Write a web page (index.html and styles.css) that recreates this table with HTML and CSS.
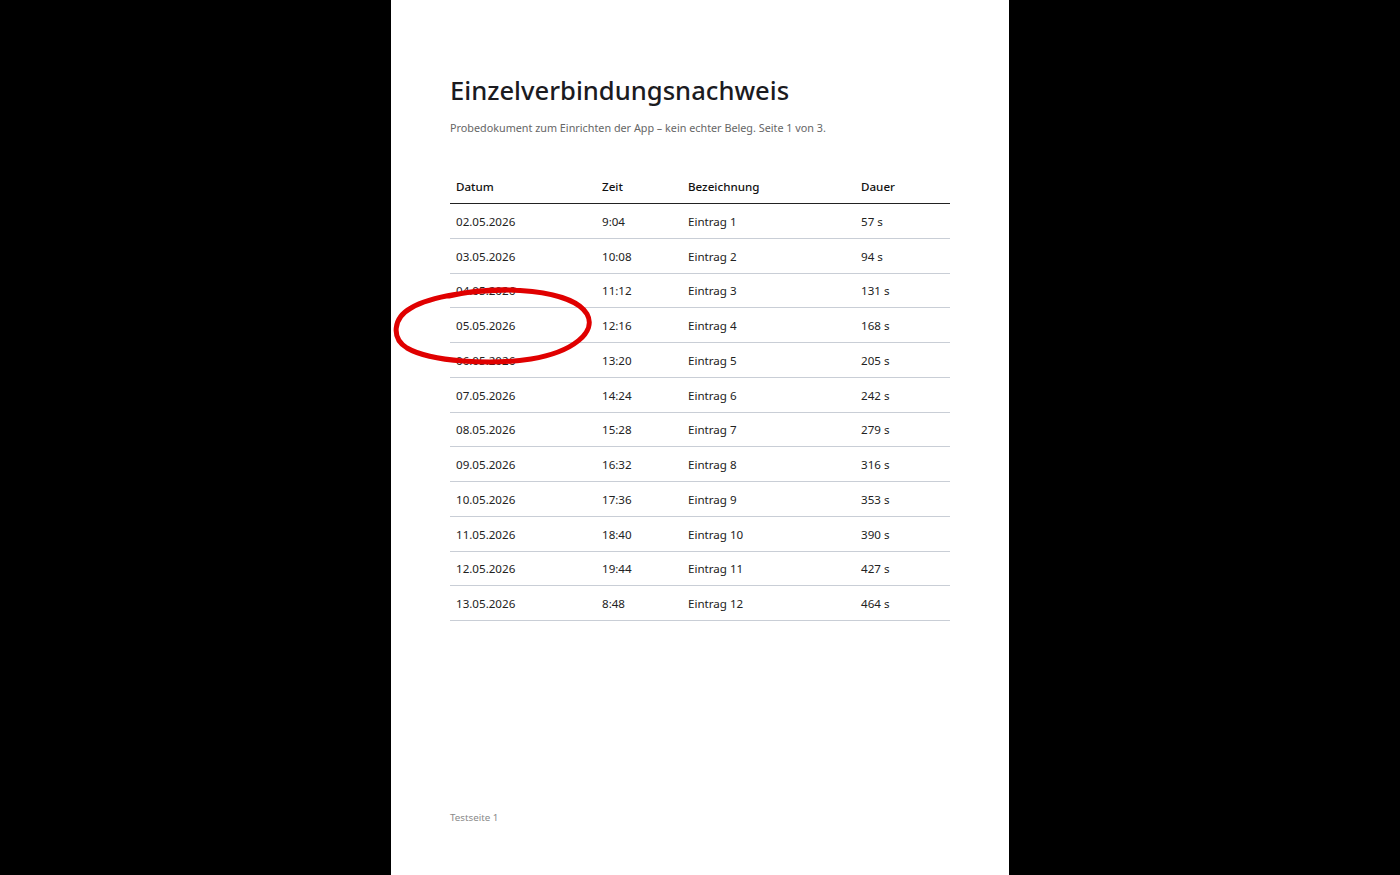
FILE: index.html
```html
<!DOCTYPE html>
<html lang="de">
<head>
<meta charset="utf-8">
<title>Einzelverbindungsnachweis</title>
<link rel="stylesheet" href="styles.css">
</head>
<body>
<div class="page">
  <h1 class="title">Einzelverbindungsnachweis</h1>
  <p class="subtitle">Probedokument zum Einrichten der App – kein echter Beleg. Seite 1 von 3.</p>
  <table class="calls">
    <thead>
      <tr><th class="c1">Datum</th><th class="c2">Zeit</th><th class="c3">Bezeichnung</th><th class="c4">Dauer</th></tr>
    </thead>
    <tbody>
      <tr><td>02.05.2026</td><td>9:04</td><td>Eintrag 1</td><td>57 s</td></tr>
      <tr><td>03.05.2026</td><td>10:08</td><td>Eintrag 2</td><td>94 s</td></tr>
      <tr><td>04.05.2026</td><td>11:12</td><td>Eintrag 3</td><td>131 s</td></tr>
      <tr><td>05.05.2026</td><td>12:16</td><td>Eintrag 4</td><td>168 s</td></tr>
      <tr><td>06.05.2026</td><td>13:20</td><td>Eintrag 5</td><td>205 s</td></tr>
      <tr><td>07.05.2026</td><td>14:24</td><td>Eintrag 6</td><td>242 s</td></tr>
      <tr><td>08.05.2026</td><td>15:28</td><td>Eintrag 7</td><td>279 s</td></tr>
      <tr><td>09.05.2026</td><td>16:32</td><td>Eintrag 8</td><td>316 s</td></tr>
      <tr><td>10.05.2026</td><td>17:36</td><td>Eintrag 9</td><td>353 s</td></tr>
      <tr><td>11.05.2026</td><td>18:40</td><td>Eintrag 10</td><td>390 s</td></tr>
      <tr><td>12.05.2026</td><td>19:44</td><td>Eintrag 11</td><td>427 s</td></tr>
      <tr><td>13.05.2026</td><td>8:48</td><td>Eintrag 12</td><td>464 s</td></tr>
    </tbody>
  </table>
  <div class="spacer"></div>
  <p class="footer">Testseite 1</p>
  <svg class="mark" width="206" height="84" viewBox="0 0 206 84" aria-hidden="true">
    <path d="M 58 12 C 110 0 182 6 196 30 C 206 48 182 68 140 75 C 100 81 40 78 16 64 C 0 54 2 34 20 24 C 40 12 82 6 124 6" fill="none" stroke="#e00000" stroke-width="5" stroke-linecap="round" stroke-linejoin="round"/>
  </svg>
</div>
</body>
</html>
```
FILE: styles.css
```css
html, body {
  margin: 0;
  padding: 0;
  background: #000;
}
body {
  font-family: "Noto Sans", "Open Sans", sans-serif;
  color: #1a1a1a;
  overflow: hidden;
}
.page {
  position: relative;
  width: 618px;
  height: 875px;
  margin: 0 auto;
  background: #fff;
  box-sizing: border-box;
  padding: 71px 59px 0 59px;
  display: flex;
  flex-direction: column;
}
.title {
  margin: 0;
  font-size: 25.6px;
  font-weight: 500;
  line-height: 40px;
  color: #1b1b1f;
}
.subtitle {
  margin: 9px 0 0 0;
  font-size: 10.8px;
  line-height: 16px;
  color: #666;
}
.calls {
  margin-top: 34px;
  width: 500px;
  border-collapse: collapse;
  font-size: 11.6px;
  table-layout: fixed;
}
.calls th {
  text-align: left;
  font-weight: 500;
  height: 33px;
  padding: 0 6px;
  border-bottom: 1.5px solid #222;
  color: #111;
}
.calls td {
  height: 32.75px;
  padding: 1px 6px 0 6px;
  border-bottom: 1px solid #c9ced6;
  color: #222;
}
.c1 { width: 134px; }
.c2 { width: 74px; }
.c3 { width: 161px; }
.c4 { width: auto; }
.spacer { flex: 1; }
.footer {
  margin: 0 0 51px 0;
  font-size: 9.8px;
  color: #8a8a8a;
}
.mark {
  position: absolute;
  left: 0;
  top: 284px;
}
```
